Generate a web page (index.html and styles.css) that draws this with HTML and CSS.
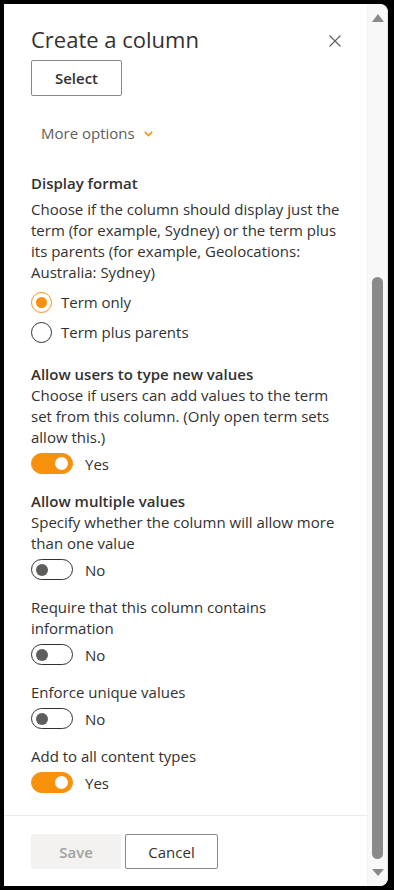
FILE: index.html
```html
<!DOCTYPE html>
<html lang="en">
<head>
<meta charset="utf-8">
<title>Create a column</title>
<link rel="stylesheet" href="styles.css">
</head>
<body>
<div class="frame">
  <div class="panel">
    <div class="content">
      <header class="head">
        <h1 class="title">Create a column</h1>
        <button class="close" aria-label="Close">
          <svg width="12" height="12" viewBox="0 0 12 12"><path d="M0.5 0.5 L11.5 11.5 M11.5 0.5 L0.5 11.5" stroke="#605e5c" stroke-width="1.1" fill="none"/></svg>
        </button>
      </header>
      <button class="btn select-btn">Select</button>
      <button class="more">More options
        <svg class="chev" width="9" height="6" viewBox="0 0 9 6"><path d="M0.8 0.9 L4.5 4.6 L8.2 0.9" stroke="#f7900a" stroke-width="1.6" fill="none"/></svg>
      </button>

      <section class="field first">
        <h2 class="label label-choice">Display format</h2>
        <p class="desc">Choose if the column should display just the term (for example, Sydney) or the term plus its parents (for example, Geolocations: Australia: Sydney)</p>
        <div class="radios">
          <label class="radio"><span class="circle on"></span>Term only</label>
          <label class="radio"><span class="circle"></span>Term plus parents</label>
        </div>
      </section>

      <section class="field">
        <h2 class="label">Allow users to type new values</h2>
        <p class="desc">Choose if users can add values to the term set from this column. (Only open term sets allow this.)</p>
        <div class="toggle-row"><span class="toggle on"><span class="knob"></span></span>Yes</div>
      </section>

      <section class="field">
        <h2 class="label">Allow multiple values</h2>
        <p class="desc">Specify whether the column will allow more than one value</p>
        <div class="toggle-row"><span class="toggle"><span class="knob"></span></span>No</div>
      </section>

      <section class="field">
        <h2 class="label plain">Require that this column contains information</h2>
        <div class="toggle-row"><span class="toggle"><span class="knob"></span></span>No</div>
      </section>

      <section class="field">
        <h2 class="label plain">Enforce unique values</h2>
        <div class="toggle-row"><span class="toggle"><span class="knob"></span></span>No</div>
      </section>

      <section class="field">
        <h2 class="label plain">Add to all content types</h2>
        <div class="toggle-row"><span class="toggle on"><span class="knob"></span></span>Yes</div>
      </section>
    </div>
    <footer class="foot">
      <button class="btn save-btn" disabled>Save</button>
      <button class="btn cancel-btn">Cancel</button>
    </footer>
  </div>
  <div class="scrollbar">
    <span class="arrow up"></span>
    <div class="track"><div class="thumb"></div></div>
    <span class="arrow down"></span>
  </div>
</div>
</body>
</html>
```

FILE: styles.css
```css
* { box-sizing: border-box; }
html, body { margin: 0; padding: 0; }
body {
  background: #000;
  width: 394px;
  height: 890px;
  overflow: hidden;
  font-family: "Segoe UI", "Open Sans", sans-serif;
  font-size: 15px;
  color: #323130;
}
.frame {
  margin: 4px 6px 4px 4px;
  height: 882px;
  display: flex;
  background: #fff;
  border-radius: 0 8px 8px 0;
  overflow: hidden;
}
.panel {
  width: 363px;
  display: flex;
  flex-direction: column;
}
.content {
  flex: 1;
  padding: 19px 26px 0 27px;
}
.head {
  display: flex;
  justify-content: space-between;
  align-items: center;
  height: 32px;
}
.title {
  margin: 0;
  font-size: 22px;
  font-weight: 400;
  color: #323130;
  line-height: 32px;
}
.close {
  border: 0;
  background: none;
  padding: 0;
  width: 12px;
  height: 12px;
  display: flex;
  margin-top: 3px;
}
.btn {
  font-family: inherit;
  font-size: 15px;
  font-weight: 600;
  height: 35px;
  border-radius: 2px;
  background: #fff;
  border: 1px solid #8a8886;
  color: #323130;
  padding: 0;
}
.select-btn {
  display: block;
  margin-top: 5px;
  width: 91px;
  height: 36px;
}
.more {
  display: flex;
  align-items: center;
  gap: 9px;
  margin-top: 21px;
  height: 32px;
  padding: 0 0 0 10px;
  border: 0;
  background: none;
  font-family: inherit;
  font-size: 15px;
  color: #605e5c;
}
.chev { margin-top: 2px; }
.field { margin-top: 17px; }
.field.first { margin-top: 24px; }
.label {
  margin: 0;
  font-size: 15px;
  line-height: 21px;
  font-weight: 600;
  color: #323130;
}
.label.plain { font-weight: 400; }
.label-choice { margin-bottom: 5px; }
.desc {
  margin: 0;
  line-height: 21px;
  color: #323130;
}
.radios { margin-top: 4px; }
.radio {
  display: flex;
  align-items: center;
  gap: 9px;
  height: 30px;
  line-height: 21px;
}
.circle {
  width: 21px;
  height: 21px;
  border-radius: 50%;
  border: 1px solid #323130;
  display: flex;
  align-items: center;
  justify-content: center;
}
.circle.on { border-color: #f7900a; }
.circle.on::after {
  content: "";
  width: 11px;
  height: 11px;
  border-radius: 50%;
  background: #f7900a;
}
.toggle-row {
  display: flex;
  align-items: center;
  gap: 12px;
  margin-top: 5px;
  height: 21px;
}
.toggle {
  width: 42px;
  height: 21px;
  border-radius: 11px;
  border: 1px solid #323130;
  display: flex;
  align-items: center;
  padding: 0 4px;
}
.knob {
  width: 12px;
  height: 12px;
  border-radius: 50%;
  background: #605e5c;
}
.toggle.on {
  background: #f7900a;
  border-color: #f7900a;
  justify-content: flex-end;
}
.toggle.on .knob { background: #fff; width: 13px; height: 13px; }
.foot {
  border-top: 1px solid #edebe9;
  padding: 18px 0 17px 27px;
  display: flex;
  gap: 4px;
}
.save-btn {
  width: 90px;
  background: #f3f2f1;
  border-color: #f3f2f1;
  color: #a19f9d;
}
.cancel-btn { width: 93px; font-weight: 400; }
.scrollbar {
  flex: 1;
  background: #f8f8f8;
  border-left: 1px solid #f3f3f3;
  border-right: 1px solid #e6e6e6;
  border-radius: 0 8px 8px 0;
  display: flex;
  flex-direction: column;
  align-items: center;
}
.arrow {
  width: 0;
  height: 0;
  border-left: 6px solid transparent;
  border-right: 6px solid transparent;
}
.arrow.up { border-bottom: 8px solid #8a8a8a; margin-top: 10px; }
.arrow.down { border-top: 7px solid #8a8a8a; margin-bottom: 10px; }
.track {
  flex: 1;
  width: 100%;
  display: flex;
  justify-content: center;
  padding: 255px 0 10px;
}
.thumb {
  width: 11px;
  background: #8a8a8a;
  border-radius: 6px;
}
```
